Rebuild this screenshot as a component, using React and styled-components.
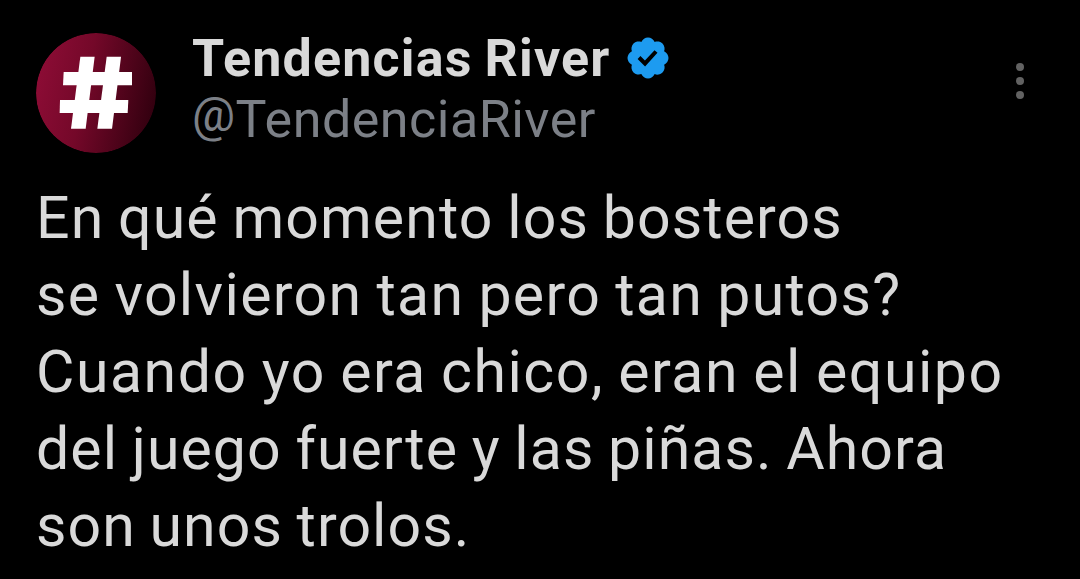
import React from 'react';
import styled, { createGlobalStyle } from 'styled-components';

const GlobalStyle = createGlobalStyle`
  body {
    margin: 0;
    background-color: #000;
  }
`;

const Tweet = styled.article`
  height: 579px;
  box-sizing: border-box;
  padding: 33px 36px 0;
  overflow: hidden;
  background-color: #000;
  color: #d9d9d9;
  font-family: Roboto, "Liberation Sans", sans-serif;
`;

const Header = styled.header`
  display: flex;
  height: 120px;
`;

const Avatar = styled.svg`
  flex: none;
  width: 120px;
  height: 120px;
  border-radius: 50%;
`;

const Author = styled.div`
  flex: 1;
  margin-left: 36px;
`;

const NameRow = styled.div`
  display: flex;
  align-items: center;
  height: 49px;
`;

const Name = styled.span`
  padding-top: 2px;
  font-size: 52px;
  line-height: 49px;
  font-weight: 700;
  letter-spacing: 1.15px;
  word-spacing: -2px;
  white-space: nowrap;
`;

const Badge = styled.svg`
  flex: none;
  width: 48px;
  height: 48px;
  margin-left: 13px;
`;

const Handle = styled.div`
  margin-top: 7px;
  color: #7c8087;
  font-size: 52px;
  line-height: 61px;
  letter-spacing: 0.5px;
`;

const At = styled.span`
  font-size: 48px;
  line-height: 1;
  vertical-align: 6px;
`;

const MenuButton = styled.button`
  display: flex;
  flex-direction: column;
  gap: 6px;
  align-self: flex-start;
  margin: 30px 20px 0 0;
  padding: 0;
  border: 0;
  background: none;
`;

const Dot = styled.span`
  width: 8px;
  height: 8px;
  border-radius: 50%;
  background-color: #626262;
`;

const Body = styled.p`
  margin: 26px 0 0;
  font-size: 59px;
  line-height: 77px;
  word-spacing: -2px;
`;

const Line = styled.span`
  display: block;
  white-space: nowrap;
  letter-spacing: ${({ $tracking }) => $tracking}px;
`;

const lines = [
  { text: 'En qué momento los bosteros', tracking: 1.1 },
  { text: 'se volvieron tan pero tan putos?', tracking: 1.34 },
  { text: 'Cuando yo era chico, eran el equipo', tracking: 1.52 },
  { text: 'del juego fuerte y las piñas. Ahora', tracking: 1.05 },
  { text: 'son unos trolos.', tracking: 1.05 },
];

const HashAvatar = () => (
  <Avatar viewBox="30 33 360 360" aria-hidden="true">
    <defs>
      <linearGradient id="maroon" x1="0" y1="0.4" x2="1" y2="0.6">
        <stop offset="0" stopColor="#8c0c35" />
        <stop offset="0.4" stopColor="#740829" />
        <stop offset="1" stopColor="#32000f" />
      </linearGradient>
    </defs>
    <circle cx="210" cy="213" r="180" fill="url(#maroon)" />
    <g fill="#fff">
      <path d="M163 104H206L179 320H135z" />
      <path d="M242 104H285L258 320H214z" />
      <path d="M113 150H318V190H111z" />
      <path d="M102 234H307L305 273H101z" />
    </g>
  </Avatar>
);

const Verified = () => (
  <Badge viewBox="0 0 22 22" fill="#1d9bf0" aria-label="Cuenta verificada">
    <path d="M20.396 11c-.018-.646-.215-1.275-.57-1.816-.354-.54-.852-.972-1.438-1.246.223-.607.27-1.264.14-1.897-.131-.634-.437-1.218-.882-1.687-.47-.445-1.053-.75-1.687-.882-.633-.13-1.29-.083-1.897.14-.273-.587-.704-1.086-1.245-1.44S11.647 1.62 11 1.604c-.646.017-1.273.213-1.813.568s-.969.854-1.24 1.44c-.608-.223-1.267-.272-1.902-.14-.635.13-1.22.436-1.69.882-.445.47-.749 1.055-.878 1.688-.13.633-.08 1.29.144 1.896-.587.274-1.087.705-1.443 1.245-.356.54-.555 1.17-.574 1.817.02.647.218 1.276.574 1.817.356.54.856.972 1.443 1.245-.224.606-.274 1.263-.144 1.896.13.634.433 1.218.877 1.688.47.443 1.054.747 1.687.878.633.132 1.29.084 1.897-.136.274.586.705 1.084 1.246 1.439.54.354 1.17.551 1.816.569.647-.016 1.276-.213 1.817-.567s.972-.854 1.245-1.44c.604.239 1.266.296 1.903.164.636-.132 1.22-.447 1.68-.907.46-.46.776-1.044.908-1.681s.075-1.299-.165-1.903c.586-.274 1.084-.705 1.439-1.246.354-.54.551-1.17.569-1.816zM9.662 14.85l-3.429-3.428 1.293-1.302 2.072 2.072 4.4-4.794 1.347 1.246z" />
  </Badge>
);

export default () => (
  <>
    <GlobalStyle />
    <Tweet>
      <Header>
        <HashAvatar />
        <Author>
          <NameRow>
            <Name>Tendencias River</Name>
            <Verified />
          </NameRow>
          <Handle><At>@</At>TendenciaRiver</Handle>
        </Author>
        <MenuButton aria-label="Más opciones">
          <Dot />
          <Dot />
          <Dot />
        </MenuButton>
      </Header>
      <Body>
        {lines.map(({ text, tracking }) => (
          <Line key={text} $tracking={tracking}>{text}</Line>
        ))}
      </Body>
    </Tweet>
  </>
);
